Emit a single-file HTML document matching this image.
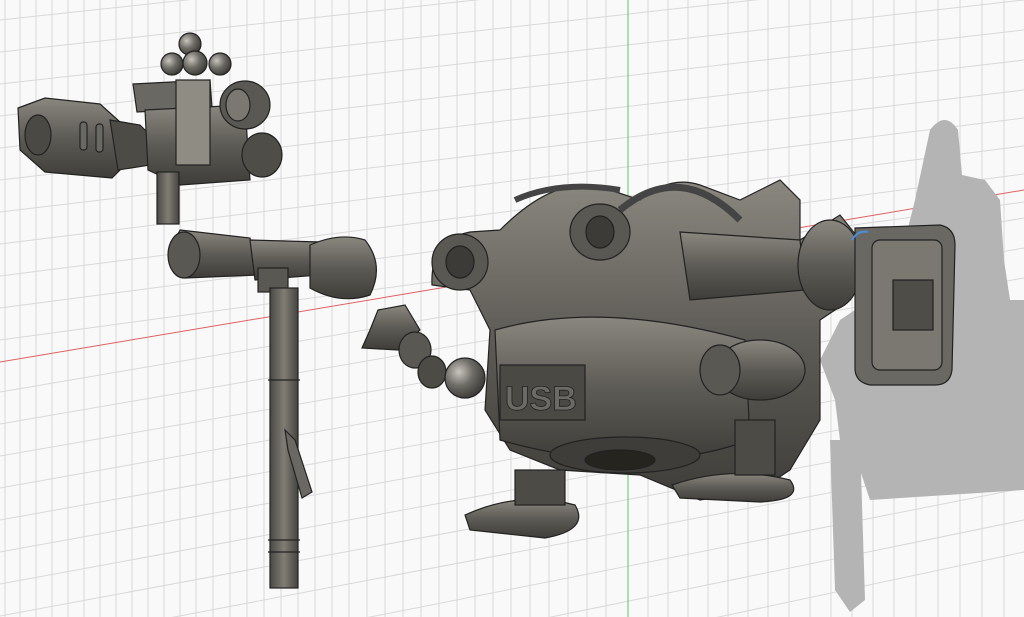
<!DOCTYPE html>
<html><head><meta charset="utf-8"><style>html,body{margin:0;padding:0;background:#fafafa;overflow:hidden;width:1024px;height:617px}svg{display:block}</style></head>
<body>
<svg width="1024" height="617" viewBox="0 0 1024 617" xmlns="http://www.w3.org/2000/svg">
<defs>
<linearGradient id="m" x1="0" y1="0" x2="0" y2="1"><stop offset="0" stop-color="#8a877f"/><stop offset=".5" stop-color="#5d5b55"/><stop offset="1" stop-color="#3e3d39"/></linearGradient>
<linearGradient id="mh" x1="0" y1="0" x2="1" y2="0"><stop offset="0" stop-color="#4a4944"/><stop offset=".5" stop-color="#807d75"/><stop offset="1" stop-color="#45443f"/></linearGradient>
<radialGradient id="b" cx=".35" cy=".35" r=".7"><stop offset="0" stop-color="#c8c5bd"/><stop offset=".5" stop-color="#6e6c66"/><stop offset="1" stop-color="#3a3935"/></radialGradient>
</defs>
<rect width="1024" height="617" fill="#f9f9f9"/>
<g stroke="#d9d9d9" stroke-width="1">
<line x1="5" y1="0" x2="5" y2="617"/><line x1="20" y1="0" x2="20" y2="617"/><line x1="36" y1="0" x2="36" y2="617"/><line x1="52" y1="0" x2="52" y2="617"/><line x1="68" y1="0" x2="68" y2="617"/><line x1="84" y1="0" x2="84" y2="617"/><line x1="100" y1="0" x2="100" y2="617"/><line x1="116" y1="0" x2="116" y2="617"/><line x1="132" y1="0" x2="132" y2="617"/><line x1="148" y1="0" x2="148" y2="617"/><line x1="164" y1="0" x2="164" y2="617"/><line x1="180" y1="0" x2="180" y2="617"/><line x1="196" y1="0" x2="196" y2="617"/><line x1="213" y1="0" x2="213" y2="617"/><line x1="230" y1="0" x2="230" y2="617"/><line x1="247" y1="0" x2="247" y2="617"/><line x1="264" y1="0" x2="264" y2="617"/><line x1="281" y1="0" x2="281" y2="617"/><line x1="298" y1="0" x2="298" y2="617"/><line x1="315" y1="0" x2="315" y2="617"/><line x1="332" y1="0" x2="332" y2="617"/><line x1="349" y1="0" x2="349" y2="617"/><line x1="367" y1="0" x2="367" y2="617"/><line x1="385" y1="0" x2="385" y2="617"/><line x1="403" y1="0" x2="403" y2="617"/><line x1="421" y1="0" x2="421" y2="617"/><line x1="439" y1="0" x2="439" y2="617"/><line x1="457" y1="0" x2="457" y2="617"/><line x1="475" y1="0" x2="475" y2="617"/><line x1="493" y1="0" x2="493" y2="617"/><line x1="511" y1="0" x2="511" y2="617"/><line x1="530" y1="0" x2="530" y2="617"/><line x1="549" y1="0" x2="549" y2="617"/><line x1="568" y1="0" x2="568" y2="617"/><line x1="587" y1="0" x2="587" y2="617"/><line x1="606" y1="0" x2="606" y2="617"/><line x1="648" y1="0" x2="648" y2="617"/><line x1="668" y1="0" x2="668" y2="617"/><line x1="688" y1="0" x2="688" y2="617"/><line x1="708" y1="0" x2="708" y2="617"/><line x1="728" y1="0" x2="728" y2="617"/><line x1="748" y1="0" x2="748" y2="617"/><line x1="768" y1="0" x2="768" y2="617"/><line x1="789" y1="0" x2="789" y2="617"/><line x1="810" y1="0" x2="810" y2="617"/><line x1="831" y1="0" x2="831" y2="617"/><line x1="852" y1="0" x2="852" y2="617"/><line x1="873" y1="0" x2="873" y2="617"/><line x1="894" y1="0" x2="894" y2="617"/><line x1="916" y1="0" x2="916" y2="617"/><line x1="938" y1="0" x2="938" y2="617"/><line x1="960" y1="0" x2="960" y2="617"/><line x1="982" y1="0" x2="982" y2="617"/><line x1="1004" y1="0" x2="1004" y2="617"/>
<line x1="0" y1="20" x2="1024" y2="-90"/><line x1="0" y1="52" x2="1024" y2="-60"/><line x1="0" y1="84" x2="1024" y2="-30"/><line x1="0" y1="116" x2="1024" y2="0"/><line x1="0" y1="148" x2="1024" y2="30"/><line x1="0" y1="180" x2="1024" y2="60"/><line x1="0" y1="212" x2="1024" y2="90"/><line x1="0" y1="244" x2="1024" y2="118"/><line x1="0" y1="276" x2="1024" y2="146"/><line x1="0" y1="308" x2="1024" y2="174"/><line x1="0" y1="340" x2="1024" y2="202"/><line x1="0" y1="392" x2="1024" y2="218"/><line x1="0" y1="424" x2="1024" y2="248"/><line x1="0" y1="456" x2="1024" y2="278"/><line x1="0" y1="488" x2="1024" y2="306"/><line x1="0" y1="520" x2="1024" y2="336"/><line x1="0" y1="552" x2="1024" y2="366"/><line x1="0" y1="584" x2="1024" y2="396"/><line x1="0" y1="616" x2="1024" y2="426"/><line x1="0" y1="650" x2="1024" y2="456"/><line x1="0" y1="690" x2="1024" y2="488"/><line x1="0" y1="730" x2="1024" y2="520"/><line x1="0" y1="770" x2="1024" y2="552"/>
</g>
<line x1="0" y1="362" x2="1024" y2="190" stroke="#e06060" stroke-width="1"/>
<line x1="628" y1="0" x2="628" y2="617" stroke="#5cc85c" stroke-width="1"/>
<g fill="#b4b4b4">
<path d="M930 130 Q945 110 958 130 L962 175 L985 180 L1000 200 L1004 260 L1010 300 L1024 300 L1024 490 L870 500 L860 470 L840 440 L835 400 L820 360 L840 320 L870 300 L900 260 L915 200 Z"/>
<path d="M830 440 L860 440 L865 600 L850 612 L835 590 Z"/>
</g>
<g stroke="#222" stroke-width="1.2">
<circle cx="190" cy="44" r="11" fill="url(#b)"/><circle cx="172" cy="64" r="11" fill="url(#b)"/><circle cx="220" cy="64" r="11" fill="url(#b)"/><circle cx="195" cy="63" r="12" fill="url(#b)"/>
<path d="M18 108 L45 98 L100 104 L120 122 L130 160 L112 178 L45 172 L20 150 Z" fill="url(#m)"/>
<ellipse cx="38" cy="135" rx="13" ry="20" fill="#4a4944"/>
<rect x="80" y="122" width="7" height="28" rx="3" fill="#6a6862"/><rect x="96" y="124" width="7" height="28" rx="3" fill="#6a6862"/>
<path d="M110 120 L140 125 L155 140 L150 165 L118 170 Z" fill="#4c4b46"/>
<path d="M133 84 L210 80 L212 108 L137 112 Z" fill="#6a6862"/>
<path d="M145 110 L245 105 L250 180 L180 185 L148 170 Z" fill="url(#m)"/>
<rect x="176" y="80" width="34" height="85" fill="#8f8c84"/>
<ellipse cx="245" cy="105" rx="25" ry="24" fill="#5a5852"/><ellipse cx="238" cy="105" rx="12" ry="16" fill="#7a7870"/>
<ellipse cx="262" cy="155" rx="20" ry="22" fill="#4e4d48"/>
<rect x="157" y="172" width="22" height="52" fill="url(#mh)"/>
</g>
<g stroke="#222" stroke-width="1.2">
<path d="M180 230 L250 238 L258 275 L185 278 Q165 258 180 230 Z" fill="url(#m)"/>
<ellipse cx="184" cy="255" rx="16" ry="23" fill="#5a5852"/>
<path d="M250 240 L320 242 L320 275 L255 280 Z" fill="url(#m)"/>
<path d="M310 245 Q340 232 365 240 Q385 265 370 295 Q340 305 310 288 Z" fill="url(#m)"/>
<rect x="258" y="268" width="30" height="24" fill="#5a5852"/>
<rect x="270" y="288" width="28" height="300" fill="url(#mh)"/>
<path d="M285 430 L295 440 L312 492 L302 498 L288 450 Z" fill="#6a6862"/>
<line x1="268" y1="380" x2="300" y2="380"/><line x1="268" y1="540" x2="300" y2="540"/><line x1="268" y1="552" x2="300" y2="552"/>
</g>
<g stroke="#222" stroke-width="1.2">
<path d="M378 310 L405 305 L420 330 L398 350 L362 348 L370 330 Z" fill="url(#m)"/>
<ellipse cx="415" cy="350" rx="16" ry="18" fill="#5a5852"/>
<ellipse cx="432" cy="372" rx="14" ry="16" fill="#4c4b46"/>
<circle cx="465" cy="378" r="20" fill="url(#b)"/>
</g>
<g stroke="#222" stroke-width="1.2">
<path d="M500 230 Q560 170 610 190 L640 200 Q670 175 700 185 L740 200 L780 180 L800 200 L800 240 L840 215 L860 240 L850 300 L820 320 L820 420 L790 470 L760 490 L700 500 L640 475 L560 470 L510 450 L485 410 L490 330 L470 290 L432 285 Q430 240 470 232 Z" fill="url(#m)"/>
<path d="M495 330 Q600 300 745 340 L750 440 Q640 480 500 440 Z" fill="url(#m)"/>
<rect x="500" y="365" width="85" height="55" fill="#4a4944"/>
<text x="505" y="410" font-family="Liberation Sans, sans-serif" font-size="34" font-weight="bold" fill="#6c6a64" stroke="#222" stroke-width=".8">USB</text>
<ellipse cx="460" cy="262" rx="28" ry="28" fill="#5a5852"/><ellipse cx="460" cy="262" rx="14" ry="16" fill="#3c3b37"/>
<ellipse cx="600" cy="232" rx="30" ry="28" fill="#5a5852"/><ellipse cx="600" cy="232" rx="14" ry="16" fill="#3c3b37"/>
<path d="M680 232 L800 240 L805 290 L690 300 Z" fill="url(#m)"/>
<ellipse cx="830" cy="265" rx="32" ry="45" fill="url(#m)"/>
<path d="M855 228 L940 225 Q955 228 955 245 L952 370 Q950 385 935 385 L870 385 Q855 382 855 368 Z" fill="#6a6862"/>
<rect x="872" y="240" width="70" height="130" rx="8" fill="#7a7870"/>
<rect x="893" y="280" width="40" height="50" fill="#4e4d48"/>
<ellipse cx="760" cy="370" rx="45" ry="30" fill="url(#m)"/>
<ellipse cx="720" cy="370" rx="20" ry="25" fill="#5a5852"/>
<ellipse cx="625" cy="455" rx="75" ry="18" fill="#3e3d39"/>
<ellipse cx="620" cy="460" rx="35" ry="10" fill="#25241f"/>
<path d="M465 515 Q520 490 575 505 Q590 530 545 538 L470 530 Z" fill="url(#m)"/>
<rect x="515" y="470" width="50" height="35" fill="#4c4b46"/>
<path d="M672 485 Q730 465 790 480 Q805 500 760 502 L680 498 Z" fill="url(#m)"/>
<rect x="735" y="420" width="40" height="55" fill="#4c4b46"/>
<path d="M515 200 Q560 180 620 190" fill="none" stroke="#444" stroke-width="6"/>
<path d="M620 210 Q680 160 740 220" fill="none" stroke="#444" stroke-width="7"/>
</g>
<path d="M852 240 Q858 230 868 232" fill="none" stroke="#4a90d8" stroke-width="2"/>
</svg>
</body></html>
